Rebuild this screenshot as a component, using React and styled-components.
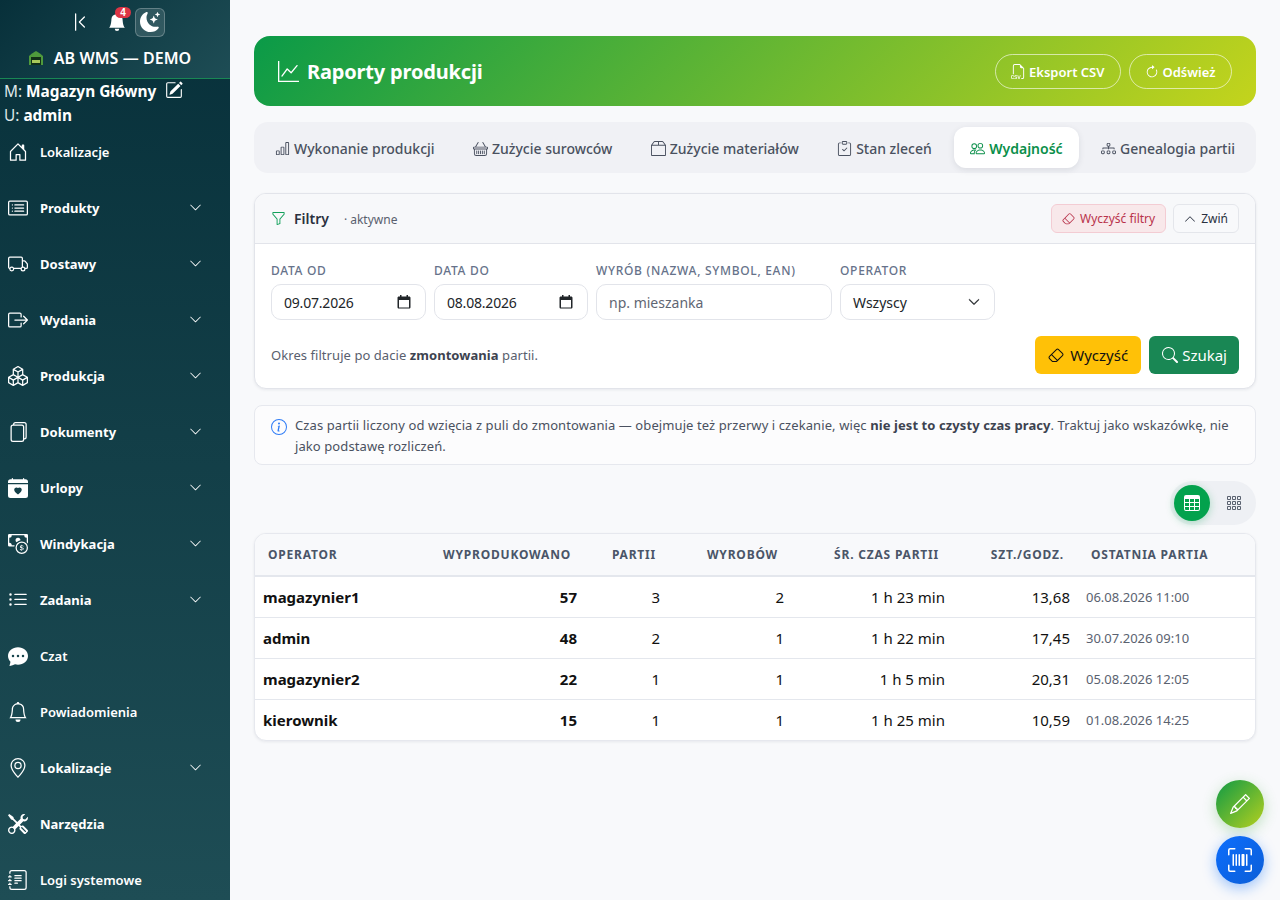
import styled, { createGlobalStyle } from "styled-components";
import {
  BsChevronBarLeft,
  BsBellFill,
  BsMoonStarsFill,
  BsPencilSquare,
  BsHouseDoor,
  BsCardList,
  BsTruck,
  BsBoxArrowRight,
  BsBoxes,
  BsFiles,
  BsCalendarHeartFill,
  BsCashCoin,
  BsListUl,
  BsChatDotsFill,
  BsBell,
  BsGeoAlt,
  BsTools,
  BsJournalText,
  BsChevronDown,
  BsChevronUp,
  BsGraphUp,
  BsFiletypeCsv,
  BsArrowClockwise,
  BsBarChart,
  BsBasket,
  BsBox2,
  BsClipboardCheck,
  BsPeople,
  BsDiagram3,
  BsFunnel,
  BsEraser,
  BsSearch,
  BsInfoCircle,
  BsTable,
  BsGrid3X3Gap,
  BsPencil,
  BsUpcScan,
} from "react-icons/bs";

const GlobalStyle = createGlobalStyle`
  * { box-sizing: border-box; }
  html, body { margin: 0; padding: 0; height: 900px; overflow: hidden; }
  body {
    background: #f8f9fb;
    font-family: "Noto Sans", "Open Sans", sans-serif;
    color: #212529;
  }
`;

const Page = styled.div`
  display: flex;
  height: 900px;
  position: relative;
`;

const Sidebar = styled.aside`
  width: 230px;
  flex: none;
  height: 900px;
  overflow: hidden;
  color: #fff;
  background: linear-gradient(180deg, #07303a 0%, #1e4d55 100%);
`;

const Brand = styled.div`
  height: 79px;
  border-bottom: 1px solid #198754;
  background: linear-gradient(135deg, #07303a 0%, #1e4d55 100%);
  display: flex;
  flex-direction: column;
  align-items: center;
`;

const BrandTools = styled.div`
  display: flex;
  align-items: center;
  gap: 18px;
  height: 44px;
  padding-left: 5px;
`;

const ToolIcon = styled.span`
  position: relative;
  display: inline-flex;
  color: #fff;
  font-size: ${(p) => p.$size || 20}px;
`;

const Badge = styled.span`
  position: absolute;
  top: -6px;
  right: -5px;
  min-width: 16px;
  height: 11px;
  padding: 0 4px;
  border-radius: 6px;
  background: #dc3545;
  font-family: "Liberation Sans", sans-serif;
  font-size: 10px;
  font-weight: 700;
  line-height: 11px;
  text-align: center;
`;

const ThemeButton = styled.span`
  width: 30px;
  height: 29px;
  margin-left: -9px;
  display: flex;
  align-items: center;
  justify-content: center;
  border-radius: 6px;
  border: 1px solid rgba(255, 255, 255, 0.25);
  background: rgba(255, 255, 255, 0.12);
  font-size: 20px;
`;

const BrandName = styled.div`
  display: flex;
  align-items: center;
  gap: 10px;
  height: 27px;
  padding-right: 11px;
  font-size: 16px;
  font-weight: 600;
  letter-spacing: 0.05px;
`;

const Who = styled.div`
  padding: 1px 0 0 4px;
  font-size: 15.4px;
  line-height: 24px;
  color: #dfe7e9;

  b {
    color: #fff;
    font-weight: 700;
  }
  svg {
    margin-left: 9px;
    vertical-align: -2px;
    color: #fff;
  }
`;

const Nav = styled.nav`
  display: flex;
  flex-direction: column;
  margin-top: -4px;
`;

const NavRow = styled.div`
  height: 56px;
  flex: none;
  padding: 0 28px 0 8px;
  display: flex;
  align-items: center;
  font-size: 13px;
  font-weight: ${(p) => (p.$bold ? 700 : 600)};
`;

const NavIcon = styled.span`
  width: 32px;
  display: flex;
  font-size: 20px;
  color: #fff;
  svg {
    display: block;
  }
`;

const NavLabel = styled.span`
  flex: 1;
`;

const NavChevron = styled(BsChevronDown)`
  margin-top: -2px;
`;

const Main = styled.main`
  flex: 1;
  min-width: 0;
  padding: 36px 24px 0;
  display: flex;
  flex-direction: column;
`;

const Hero = styled.header`
  height: 70px;
  border-radius: 16px;
  padding: 0 24px;
  display: flex;
  align-items: center;
  justify-content: space-between;
  background: linear-gradient(135deg, #0a9a48 0%, #c4d41c 100%);
  color: #fff;
`;

const HeroTitle = styled.h1`
  margin: 0;
  display: flex;
  align-items: center;
  gap: 8px;
  font-size: 20px;
  font-weight: 700;
  letter-spacing: -0.17px;
  svg {
    font-size: 21px;
  }
`;

const HeroActions = styled.div`
  display: flex;
  gap: 8px;
`;

const PillButton = styled.button`
  height: 35px;
  padding: 1px 15.5px 0;
  display: flex;
  align-items: center;
  gap: 3px;
  border-radius: 18px;
  border: 1px solid rgba(255, 255, 255, 0.6);
  background: transparent;
  color: #fff;
  font: 600 13px "Noto Sans", sans-serif;
`;

const Tabs = styled.div`
  margin-top: 16px;
  height: 51px;
  padding: 5px;
  display: flex;
  justify-content: space-between;
  border-radius: 14px;
  background: #f0f1f5;
`;

const Tab = styled.div`
  padding: 2px 16px 0;
  display: flex;
  align-items: center;
  gap: 4px;
  border-radius: 12px;
  font-size: 14px;
  font-weight: ${(p) => (p.$active ? 600 : 500)};
  color: ${(p) => (p.$active ? "#0a8f4a" : "#4a5160")};
  background: ${(p) => (p.$active ? "#fff" : "transparent")};
  box-shadow: ${(p) => (p.$active ? "0 2px 6px rgba(30, 40, 60, 0.1)" : "none")};
  svg {
    font-size: 15px;
  }
`;

const FilterCard = styled.section`
  margin-top: 20px;
  height: 196px;
  border: 1px solid #e2e4ea;
  border-radius: 12px;
  background: #fff;
  box-shadow: 0 1px 3px rgba(30, 40, 60, 0.08);
  overflow: hidden;
`;

const FilterHead = styled.div`
  height: 50px;
  padding: 0 16px;
  display: flex;
  align-items: center;
  background: #f7f8fa;
  border-bottom: 1px solid #e2e4ea;
`;

const FilterTitle = styled.span`
  display: flex;
  align-items: center;
  gap: 8px;
  font-size: 14px;
  font-weight: 600;
  color: #2a3140;
  svg {
    color: #12a05a;
    font-size: 15px;
  }
`;

const FilterHint = styled.span`
  margin: 1px 0 0 15px;
  flex: 1;
  font-size: 12px;
  color: #59606e;
`;

const SmallButton = styled.button`
  height: 29px;
  margin-left: 7px;
  padding: 0 10px;
  display: flex;
  align-items: center;
  gap: 5px;
  border-radius: 6px;
  border: 1px solid ${(p) => (p.$danger ? "#f3ccd3" : "#e4e6eb")};
  background: ${(p) => (p.$danger ? "#f8e8ea" : "#f8f9fb")};
  color: ${(p) => (p.$danger ? "#b8324a" : "#2a3140")};
  font: 400 12px "Noto Sans", sans-serif;
`;

const FilterBody = styled.div`
  padding: 20px 16px 0;
`;

const Fields = styled.div`
  display: flex;
  gap: 8px;
`;

const Field = styled.label`
  width: ${(p) => p.$w}px;
  display: flex;
  flex-direction: column;
`;

const FieldLabel = styled.span`
  height: 20px;
  font-size: 12px;
  line-height: 14px;
  font-weight: 500;
  letter-spacing: 0.7px;
  white-space: nowrap;
  color: #66728a;
`;

const InputBox = styled.div`
  height: 36px;
  padding: 0 14px 0 12px;
  display: flex;
  align-items: center;
  justify-content: space-between;
  border: 1px solid #e2e4ea;
  border-radius: 10px;
  background: #fff;
  font-size: 14px;
  letter-spacing: ${(p) => (p.$date ? "-0.2px" : "0")};
  color: ${(p) => (p.$placeholder ? "#5f6673" : "#212529")};
  svg {
    color: #212529;
  }
`;

const SelectChevron = styled(BsChevronDown)`
  stroke: currentColor;
  stroke-width: 0.8px;
`;

const FilterFoot = styled.div`
  margin-top: 16px;
  display: flex;
  align-items: center;
  justify-content: space-between;
`;

const FootNote = styled.span`
  font-size: 13px;
  letter-spacing: 0.06px;
  color: #59606e;
  b {
    font-weight: 700;
    color: #3d4350;
  }
`;

const FootActions = styled.div`
  display: flex;
  gap: 8px;
`;

const ActionButton = styled.button`
  height: 38px;
  padding: ${(p) => (p.$green ? "0 12px 0 13px" : "0 13px")};
  display: flex;
  align-items: center;
  gap: ${(p) => (p.$green ? 4 : 6)}px;
  border: 0;
  border-radius: 6px;
  background: ${(p) => (p.$green ? "#198754" : "#ffc107")};
  color: ${(p) => (p.$green ? "#fff" : "#111")};
  font: 400 15px "Noto Sans", sans-serif;
  svg {
    font-size: 16px;
  }
`;

const InfoBox = styled.div`
  margin-top: 16px;
  height: 60px;
  padding: 9px 16px 0;
  display: flex;
  gap: 8px;
  border: 1px solid #e6e8ee;
  border-radius: 8px;
  background: #fcfcfd;
  font-size: 13px;
  letter-spacing: 0.09px;
  line-height: 21px;
  color: #4a5160;
  b {
    font-weight: 700;
    color: #3d4350;
  }
  svg {
    flex: none;
    margin-top: 4px;
    font-size: 16px;
    color: #2f7cf6;
  }
`;

const ViewRow = styled.div`
  margin-top: 16px;
  display: flex;
  justify-content: flex-end;
`;

const ViewSwitch = styled.div`
  height: 44px;
  padding: 4px;
  display: flex;
  gap: 6px;
  border-radius: 22px;
  background: #eef0f4;
`;

const ViewButton = styled.span`
  width: 36px;
  height: 36px;
  display: flex;
  align-items: center;
  justify-content: center;
  border-radius: 50%;
  font-size: 16px;
  color: ${(p) => (p.$on ? "#fff" : "#5a6270")};
  background: ${(p) => (p.$on ? "#03a24d" : "transparent")};
  box-shadow: ${(p) => (p.$on ? "0 2px 8px rgba(3, 162, 77, 0.3)" : "none")};
`;

const TableCard = styled.div`
  margin-top: 8px;
  border: 1px solid #e6e8ee;
  border-radius: 12px;
  background: #fff;
  box-shadow: 0 1px 3px rgba(30, 40, 60, 0.08);
  overflow: hidden;
`;

const Grid = styled.table`
  width: 100%;
  border-collapse: collapse;
  table-layout: fixed;
`;

const Col = styled.col`
  width: ${(p) => (p.$w ? `${p.$w}px` : "auto")};
`;

const Th = styled.th`
  height: 42px;
  padding: 0 ${(p) => p.$pr || 14}px 0 13px;
  background: #f8f9fb;
  border-bottom: 2px solid #e4e7ed;
  font-size: 12px;
  font-weight: 700;
  letter-spacing: 0.8px;
  white-space: nowrap;
  color: #4a5568;
  text-align: ${(p) => p.$align || "left"};
`;

const Td = styled.td`
  height: 41px;
  padding: 0 8px;
  border-top: 1px solid #e4e7ed;
  font-size: ${(p) => (p.$muted ? "13px" : "15px")};
  font-weight: ${(p) => (p.$strong ? 700 : 400)};
  color: ${(p) => (p.$muted ? "#5a6270" : "#111")};
  text-align: ${(p) => p.$align || "left"};
  white-space: nowrap;
  tr:first-child > & {
    border-top: 0;
  }
`;

const Fab = styled.button`
  position: absolute;
  right: 16px;
  bottom: ${(p) => p.$bottom}px;
  width: 48px;
  height: 48px;
  display: flex;
  align-items: center;
  justify-content: center;
  border: 0;
  border-radius: 50%;
  color: #fff;
  font-size: ${(p) => p.$size}px;
  background: ${(p) =>
    p.$blue
      ? "linear-gradient(135deg, #0d6efd, #0b5ed7)"
      : "linear-gradient(135deg, #0f9a45, #b5d01f)"};
  box-shadow: 0 4px 14px
    ${(p) => (p.$blue ? "rgba(13, 110, 253, 0.4)" : "rgba(60, 170, 60, 0.3)")};
`;

const navItems = [
  { label: "Lokalizacje", icon: BsHouseDoor },
  { label: "Produkty", icon: BsCardList, sub: true },
  { label: "Dostawy", icon: BsTruck, sub: true },
  { label: "Wydania", icon: BsBoxArrowRight, sub: true },
  { label: "Produkcja", icon: BsBoxes, sub: true },
  { label: "Dokumenty", icon: BsFiles, sub: true },
  { label: "Urlopy", icon: BsCalendarHeartFill, sub: true },
  { label: "Windykacja", icon: BsCashCoin, sub: true },
  { label: "Zadania", icon: BsListUl, sub: true },
  { label: "Czat", icon: BsChatDotsFill },
  { label: "Powiadomienia", icon: BsBell },
  { label: "Lokalizacje", icon: BsGeoAlt, sub: true },
  { label: "Narzędzia", icon: BsTools, bold: true },
  { label: "Logi systemowe", icon: BsJournalText },
];

const tabs = [
  { label: "Wykonanie produkcji", icon: BsBarChart },
  { label: "Zużycie surowców", icon: BsBasket },
  { label: "Zużycie materiałów", icon: BsBox2 },
  { label: "Stan zleceń", icon: BsClipboardCheck },
  { label: "Wydajność", icon: BsPeople, active: true },
  { label: "Genealogia partii", icon: BsDiagram3 },
];

const rows = [
  ["magazynier1", "57", "3", "2", "1 h 23 min", "13,68", "06.08.2026 11:00"],
  ["admin", "48", "2", "1", "1 h 22 min", "17,45", "30.07.2026 09:10"],
  ["magazynier2", "22", "1", "1", "1 h 5 min", "20,31", "05.08.2026 12:05"],
  ["kierownik", "15", "1", "1", "1 h 25 min", "10,59", "01.08.2026 14:25"],
];

const WarehouseLogo = () => (
  <svg width="16" height="16" viewBox="0 0 16 16">
    <path d="M8 1 L12 3.5 L15 6 V15 H1 V6 L4 3.5 Z" fill="#4f9a3c" />
    <rect x="3" y="7" width="10" height="8" fill="#123018" />
    <rect x="4" y="10" width="8" height="3" fill="#a9c85a" />
  </svg>
);

const CalendarIcon = () => (
  <svg width="14" height="14" viewBox="0 0 14 14" fill="#212529">
    <path d="M3 0h1.5v1.5h5V0H11v1.5h1.2c.7 0 1.3.6 1.3 1.3v9.4c0 .7-.6 1.3-1.3 1.3H1.8c-.7 0-1.3-.6-1.3-1.3V2.8c0-.7.6-1.3 1.3-1.3H3V0zM2 5v7.5h10V5H2z" />
  </svg>
);

export default function App() {
  return (
    <Page>
      <GlobalStyle />
      <Sidebar>
        <Brand>
          <BrandTools>
            <ToolIcon $size={20}>
              <BsChevronBarLeft />
            </ToolIcon>
            <ToolIcon $size={18}>
              <BsBellFill />
              <Badge>4</Badge>
            </ToolIcon>
            <ThemeButton>
              <BsMoonStarsFill />
            </ThemeButton>
          </BrandTools>
          <BrandName>
            <WarehouseLogo />
            AB WMS — DEMO
          </BrandName>
        </Brand>
        <Who>
          <div>
            M: <b>Magazyn Główny</b>
            <BsPencilSquare size={18} />
          </div>
          <div>
            U: <b>admin</b>
          </div>
        </Who>
        <Nav>
          {navItems.map((item, i) => (
            <NavRow key={i} $bold={item.sub || item.bold}>
              <NavIcon>
                <item.icon />
              </NavIcon>
              <NavLabel>{item.label}</NavLabel>
              {item.sub && <NavChevron size={13} />}
            </NavRow>
          ))}
        </Nav>
      </Sidebar>
      <Main>
        <Hero>
          <HeroTitle>
            <BsGraphUp />
            Raporty produkcji
          </HeroTitle>
          <HeroActions>
            <PillButton>
              <BsFiletypeCsv size={15} />
              Eksport CSV
            </PillButton>
            <PillButton>
              <BsArrowClockwise size={14} />
              Odśwież
            </PillButton>
          </HeroActions>
        </Hero>
        <Tabs>
          {tabs.map((t) => (
            <Tab key={t.label} $active={t.active}>
              <t.icon />
              {t.label}
            </Tab>
          ))}
        </Tabs>
        <FilterCard>
          <FilterHead>
            <FilterTitle>
              <BsFunnel />
              Filtry
            </FilterTitle>
            <FilterHint>· aktywne</FilterHint>
            <SmallButton $danger>
              <BsEraser size={13} />
              Wyczyść filtry
            </SmallButton>
            <SmallButton>
              <BsChevronUp size={12} />
              Zwiń
            </SmallButton>
          </FilterHead>
          <FilterBody>
            <Fields>
              <Field $w={155}>
                <FieldLabel>DATA OD</FieldLabel>
                <InputBox $date>
                  09.07.2026
                  <CalendarIcon />
                </InputBox>
              </Field>
              <Field $w={154}>
                <FieldLabel>DATA DO</FieldLabel>
                <InputBox $date>
                  08.08.2026
                  <CalendarIcon />
                </InputBox>
              </Field>
              <Field $w={236}>
                <FieldLabel>WYRÓB (NAZWA, SYMBOL, EAN)</FieldLabel>
                <InputBox $placeholder>np. mieszanka</InputBox>
              </Field>
              <Field $w={155}>
                <FieldLabel>OPERATOR</FieldLabel>
                <InputBox>
                  Wszyscy
                  <SelectChevron size={12} />
                </InputBox>
              </Field>
            </Fields>
            <FilterFoot>
              <FootNote>
                Okres filtruje po dacie <b>zmontowania</b> partii.
              </FootNote>
              <FootActions>
                <ActionButton>
                  <BsEraser />
                  Wyczyść
                </ActionButton>
                <ActionButton $green>
                  <BsSearch />
                  Szukaj
                </ActionButton>
              </FootActions>
            </FilterFoot>
          </FilterBody>
        </FilterCard>
        <InfoBox>
          <BsInfoCircle />
          <span>
            Czas partii liczony od wzięcia z puli do zmontowania — obejmuje też
            przerwy i czekanie, więc <b>nie jest to czysty czas pracy</b>. Traktuj
            jako wskazówkę, nie jako podstawę rozliczeń.
          </span>
        </InfoBox>
        <ViewRow>
          <ViewSwitch>
            <ViewButton $on>
              <BsTable />
            </ViewButton>
            <ViewButton>
              <BsGrid3X3Gap />
            </ViewButton>
          </ViewSwitch>
        </ViewRow>
        <TableCard>
          <Grid>
            <colgroup>
              <Col $w={150} />
              <Col $w={180} />
              <Col $w={83} />
              <Col $w={124} />
              <Col $w={161} />
              <Col $w={125} />
              <Col />
            </colgroup>
            <thead>
              <tr>
                <Th>OPERATOR</Th>
                <Th $align="right">WYPRODUKOWANO</Th>
                <Th $align="right" $pr={12}>
                  PARTII
                </Th>
                <Th $align="right">WYROBÓW</Th>
                <Th $align="right">ŚR. CZAS PARTII</Th>
                <Th $align="right">SZT./GODZ.</Th>
                <Th>OSTATNIA PARTIA</Th>
              </tr>
            </thead>
            <tbody>
              {rows.map((r) => (
                <tr key={r[0]}>
                  <Td $strong>{r[0]}</Td>
                  <Td $strong $align="right">
                    {r[1]}
                  </Td>
                  <Td $align="right">{r[2]}</Td>
                  <Td $align="right">{r[3]}</Td>
                  <Td $align="right">{r[4]}</Td>
                  <Td $align="right">{r[5]}</Td>
                  <Td $muted>{r[6]}</Td>
                </tr>
              ))}
            </tbody>
          </Grid>
        </TableCard>
      </Main>
      <Fab $bottom={72} $size={20}>
        <BsPencil />
      </Fab>
      <Fab $blue $bottom={16} $size={24}>
        <BsUpcScan />
      </Fab>
    </Page>
  );
}
